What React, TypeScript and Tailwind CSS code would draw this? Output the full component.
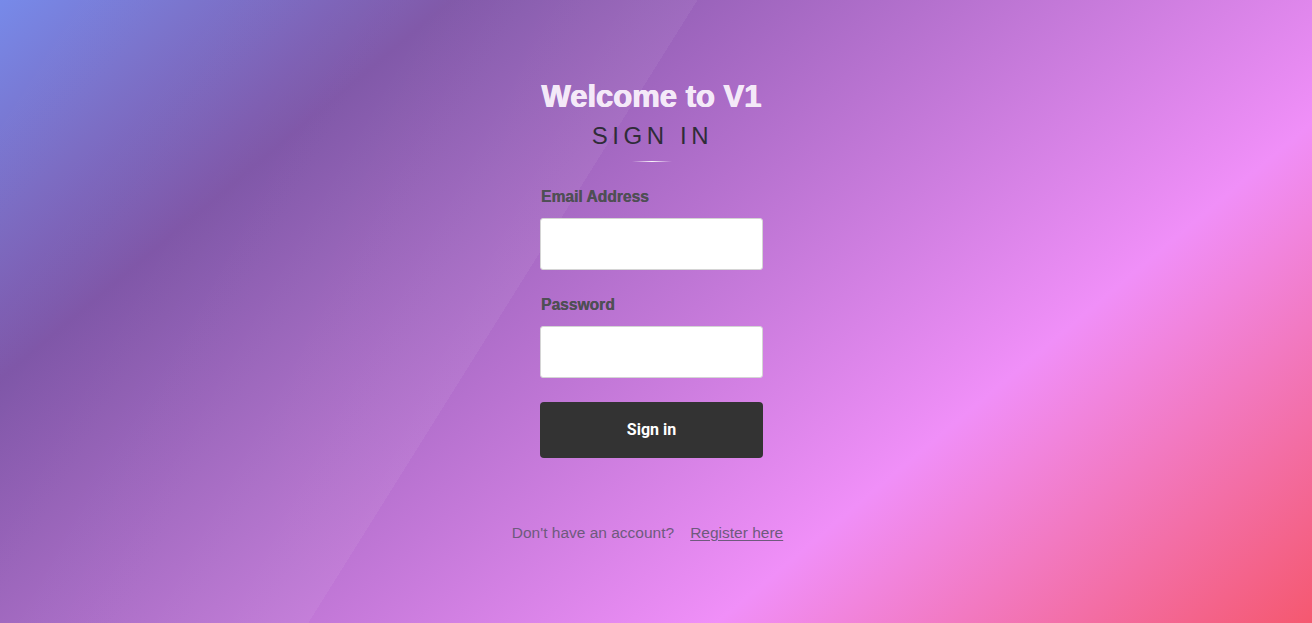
import { useState } from "react";

const App = () => {
  const [email, setEmail] = useState("");
  const [password, setPassword] = useState("");

  return (
    <div className="relative min-h-[623px] w-full overflow-hidden bg-[linear-gradient(140deg,#778ae9_0%,#7e55a7_22%,#f08ff8_71%,#f5586f_100%)] font-['Liberation_Sans',Arial,sans-serif]">
      {/* soft light sheet on the left side */}
      <div className="pointer-events-none absolute inset-0 bg-[linear-gradient(122deg,rgba(255,255,255,0)_0%,rgba(255,255,255,0.015)_20%,rgba(255,255,255,0.055)_41%,rgba(255,255,255,0)_41%)]" />

      <div className="relative flex flex-col items-center pt-[79px] pr-[9px]">
        <h1 className="text-[31px] leading-[36px] font-bold text-[#f4e9f8] [text-shadow:0.5px_0_0_#f4e9f8,-0.5px_0_0_#f4e9f8]">
          Welcome to V1
        </h1>
        <h2 className="mt-[5px] pl-[2px] text-[24px] leading-[32px] tracking-[4.6px] text-[#2f2c38]">
          SIGN IN
        </h2>
        <div className="mt-[9px] h-px w-[40px] bg-[linear-gradient(90deg,rgba(255,255,255,0),rgba(255,255,255,0.95),rgba(255,255,255,0))]" />

        <form
          className="mt-[25px] flex w-[223px] flex-col"
          onSubmit={(e) => e.preventDefault()}>
          <label
            htmlFor="email"
            className="pl-px text-[15.6px] leading-[20px] font-bold text-[#4f4f55] [text-shadow:0.3px_0_0_#4f4f55]">
            Email Address
          </label>
          <input
            id="email"
            type="email"
            value={email}
            onChange={(e) => setEmail(e.target.value)}
            className="mt-[11px] h-[52px] w-full rounded-[3px] border border-[#d4d4d4] bg-white px-3 text-[15px] outline-none"
          />

          <label
            htmlFor="password"
            className="mt-[25px] pl-px text-[15.6px] leading-[20px] font-bold text-[#4f4f55] [text-shadow:0.3px_0_0_#4f4f55]">
            Password
          </label>
          <input
            id="password"
            type="password"
            value={password}
            onChange={(e) => setPassword(e.target.value)}
            className="mt-[11px] h-[52px] w-full rounded-[3px] border border-[#d4d4d4] bg-white px-3 text-[15px] outline-none"
          />

          <button
            type="submit"
            className="mt-[24px] h-[56px] w-full rounded-[4px] bg-[#333333] font-['Roboto',sans-serif] text-[16px] font-bold text-white">
            Sign in
          </button>
        </form>

        <p className="mt-[65px] pr-[8px] text-[15.5px] leading-[20px] text-[#6e5a7d]">
          Don&apos;t have an account?
          <a href="#" className="ml-[16px] underline underline-offset-2 text-[#6e5a7d]">
            Register here
          </a>
        </p>
      </div>
    </div>
  );
};

export default App;
